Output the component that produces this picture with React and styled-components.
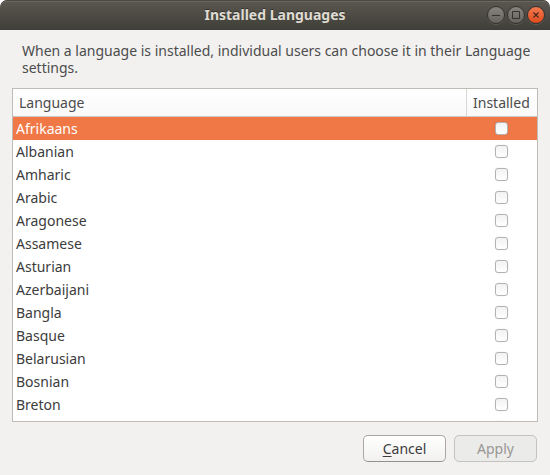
import React, { useState } from "react";
import styled, { createGlobalStyle, css } from "styled-components";

const GlobalStyle = createGlobalStyle`
  *, *::before, *::after { box-sizing: border-box; }
  body {
    margin: 0;
    background: #fff;
    color: #3c3c3c;
    font-family: "Noto Sans", "Open Sans", sans-serif;
    font-size: 14px;
    line-height: 17px;
  }
`;

const Window = styled.main`
  display: flex;
  flex-direction: column;
  height: 100vh;
  background: #f2f1f0;
  border-radius: 7px 7px 0 0;
  overflow: hidden;
`;

const TitleBar = styled.header`
  display: grid;
  grid-template-columns: 1fr auto 1fr;
  align-items: center;
  flex: none;
  height: 30px;
  padding: 0 5px;
  background: linear-gradient(#5b5850, #3f3e38);
  border-radius: 7px 7px 0 0;
  box-shadow: inset 0 1px #4b4943, inset 0 2px #69665d;
`;

const Title = styled.h1`
  grid-column: 2;
  margin: 0;
  color: #dfdbd2;
  font-size: 14px;
  font-weight: 700;
  line-height: 20px;
  text-shadow: 0 -1px #33322e;
`;

const WindowControls = styled.div`
  display: flex;
  justify-content: flex-end;
  gap: 2px;
`;

const WindowButton = styled.button`
  display: grid;
  place-items: center;
  width: 18px;
  height: 18px;
  padding: 0;
  border: 1px solid #33322e;
  border-radius: 50%;
  background: ${(p) =>
    p.$close
      ? "linear-gradient(#f47850, #df4d1d)"
      : "linear-gradient(#85837b, #65635c)"};
  color: ${(p) => (p.$close ? "#4b2a1d" : "#34332e")};
  box-shadow: 0 1px rgba(255, 255, 255, 0.12);

  svg { display: block; }
`;

const Content = styled.section`
  display: flex;
  flex-direction: column;
  flex: 1;
  min-height: 0;
  padding: 12px 12px 13px;
`;

const Message = styled.p`
  flex: none;
  margin: 0 0 12px;
  padding: 0 0 0 10px;
  color: #4c4c4c;
`;

const ListFrame = styled.div`
  flex: 1;
  min-height: 0;
  overflow-y: auto;
  scrollbar-width: none;
  background: #fff;
  border: 1px solid #bfbcb8;
`;

const LanguageTable = styled.table`
  width: 100%;
  table-layout: fixed;
  border-collapse: separate;
  border-spacing: 0;
`;

const HeaderCell = styled.th`
  position: sticky;
  top: 0;
  z-index: 1;
  width: ${(p) => (p.$narrow ? "71px" : "auto")};
  height: 28px;
  padding: 0 6px;
  background: linear-gradient(#fff, #f9f9f9);
  border-bottom: 1px solid #cbc9c6;
  border-left: ${(p) => (p.$narrow ? "1px solid #dad8d6" : "0")};
  color: #4c4c4c;
  font-weight: 400;
  text-align: left;
  white-space: nowrap;
`;

const Row = styled.tr`
  ${(p) =>
    p.$selected &&
    css`
      background: #f07746;
      color: #fff;
    `}
`;

const NameCell = styled.td`
  height: 23px;
  padding: 0 3px;
`;

const CheckCell = styled.td`
  height: 23px;
  padding: 0;
`;

const CheckBox = styled.input`
  appearance: none;
  display: block;
  width: 13px;
  height: 13px;
  margin: 0 auto;
  border: 1px solid #b5b3b1;
  border-radius: 3px;
  background: linear-gradient(#f2f2f2, #fff);
  box-shadow: 0 0 1px rgba(0, 0, 0, 0.2);

  &:checked { background: #f07746; }
`;

const Actions = styled.footer`
  display: flex;
  justify-content: flex-end;
  gap: 8px;
  flex: none;
  margin-top: 13px;
  padding-right: 1px;
`;

const ActionButton = styled.button`
  width: 83px;
  height: 27px;
  padding: 0;
  border: 1px solid #aaa7a4;
  border-bottom-color: #928f8c;
  border-radius: 5px;
  background: linear-gradient(#fff, #f2f1f0);
  color: #3c3c3c;
  font: inherit;

  &:disabled {
    border-color: #c5c3c1;
    background: #ebebea;
    color: #999794;
  }
`;

const Mnemonic = styled.span`
  text-decoration: underline;
  text-underline-offset: 2px;
`;

const languages = [
  "Afrikaans",
  "Albanian",
  "Amharic",
  "Arabic",
  "Aragonese",
  "Assamese",
  "Asturian",
  "Azerbaijani",
  "Bangla",
  "Basque",
  "Belarusian",
  "Bosnian",
  "Breton",
  "",
];

export default function App() {
  const [selected, setSelected] = useState(0);

  return (
    <>
      <GlobalStyle />
      <Window>
        <TitleBar>
          <Title>Installed Languages</Title>
          <WindowControls>
            <WindowButton aria-label="Minimize">
              <svg width="16" height="16" stroke="currentColor" fill="none">
                <path d="M4 8.5h8" />
              </svg>
            </WindowButton>
            <WindowButton aria-label="Maximize">
              <svg width="16" height="16" stroke="currentColor" fill="none">
                <path d="M4.500 4.500h7v7h-7z" />
              </svg>
            </WindowButton>
            <WindowButton aria-label="Close" $close>
              <svg width="16" height="16" stroke="currentColor" fill="none" strokeWidth="1.200">
                <path d="M5.500 5.500l5 5M10.500 5.500l-5 5" />
              </svg>
            </WindowButton>
          </WindowControls>
        </TitleBar>
        <Content>
          <Message>
            When a language is installed, individual users can choose it in their Language settings.
          </Message>
          <ListFrame>
            <LanguageTable>
              <thead>
                <tr>
                  <HeaderCell scope="col">Language</HeaderCell>
                  <HeaderCell scope="col" $narrow>Installed</HeaderCell>
                </tr>
              </thead>
              <tbody>
                {languages.map((name, i) => (
                  <Row key={i} $selected={i === selected} onClick={() => setSelected(i)}>
                    <NameCell>
                      <label htmlFor={`language-${i}`}>{name}</label>
                    </NameCell>
                    <CheckCell>
                      <CheckBox type="checkbox" id={`language-${i}`} />
                    </CheckCell>
                  </Row>
                ))}
              </tbody>
            </LanguageTable>
          </ListFrame>
          <Actions>
            <ActionButton type="button">
              <Mnemonic>C</Mnemonic>ancel
            </ActionButton>
            <ActionButton type="button" disabled>
              Apply
            </ActionButton>
          </Actions>
        </Content>
      </Window>
    </>
  );
}
